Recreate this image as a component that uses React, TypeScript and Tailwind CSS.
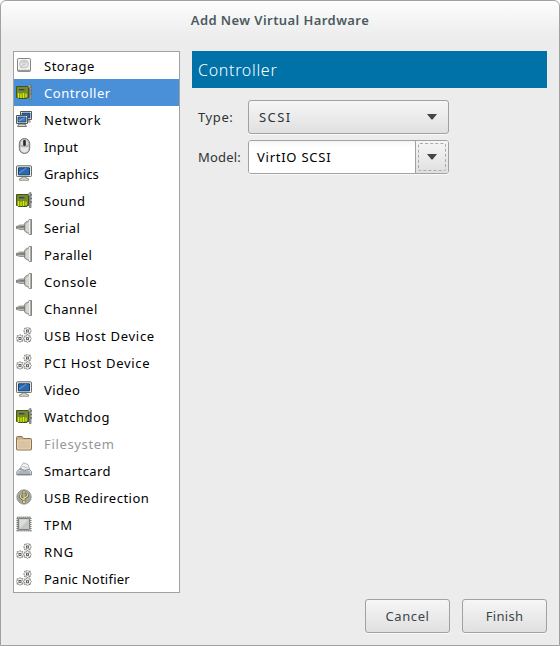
import React from "react";

type Kind = "disk" | "card" | "network" | "mouse" | "monitor" | "serial" | "gears" | "folder" | "smartcard" | "usb" | "chip";

function Gear({ x, y }: { x: number; y: number }) {
  return (
    <g transform={`translate(${x} ${y})`}>
      <path d="M0-3.900L1.300-2.700 2.800-2.800 2.700-1.300 3.900 0 2.700 1.300 2.800 2.800 1.300 2.700 0 3.900-1.300 2.700-2.800 2.800-2.700 1.300-3.900 0-2.700-1.300-2.800-2.800-1.300-2.700z" fill="#f8f8f7" stroke="#5e615b" strokeWidth=".9" strokeDasharray="1.600 .4" />
      <rect x="-1" y="-1" width="2" height="2" fill="#fff" stroke="#555852" strokeWidth=".9" />
    </g>
  );
}

function Icon({ kind }: { kind: Kind }) {
  return (
    <svg width="16" height="16" viewBox="0 0 16 16" className="block shrink-0">
      {kind === "disk" && (
        <>
          <rect x="1.500" y="1.500" width="13" height="13" rx="1" fill="#cfcfcf" stroke="#858782" />
          <path d="M2.500 2.500h11v9.500h-11z" fill="#ededed" stroke="#fff" strokeWidth=".8" />
          <ellipse cx="8" cy="7" rx="4.300" ry="3.800" fill="#e2e2e2" stroke="#c2c2c2" />
          <path d="M4.500 11l3-3.500 2-.5M5.500 5.500q2.500-1.500 5 0" fill="none" stroke="#b4b4b4" strokeWidth=".8" />
          <path d="M2 13h12v1.500H2z" fill="#989a96" />
        </>
      )}
      {kind === "card" && (
        <>
          <path d="M.5 2.500h12v11H11v1H2.500v-1h-2z" fill="#728c20" stroke="#46531c" />
          <path d="M2.500 4.500H9v2.300H2.500z" fill="#3b433c" stroke="#8a9573" strokeWidth=".6" />
          <path d="M2.500 9v5M5 9.500v4.500M7.500 9v5M10 9.500v4" stroke="#dce900" strokeWidth="1.400" />
          <path d="M11.500 3.500l2-2.800H15v14.800h-1.500v-12z" fill="#b9bcb5" stroke="#666963" strokeWidth=".8" />
          <path d="M14 3h2M14 6.500h2M14 10h2" stroke="#72756d" strokeWidth="1.300" />
        </>
      )}
      {kind === "network" && (
        <>
          <path d="M4.500.5h11v8h-11z" fill="#eeeeec" stroke="#555753" />
          <path d="M6 2h8v5H6z" fill="#2862a5" stroke="#123f75" strokeWidth=".7" />
          <path d="M12 9h2l1 2.500h-3z" fill="#999" />
          <path d="M.5 4.500h11v8H.5z" fill="#eeeeec" stroke="#555753" />
          <path d="M2 6h8v5H2z" fill="#3c79bb" stroke="#123f75" strokeWidth=".8" />
          <path d="M2.500 9.500L8 6.500h1.500L3.500 10.500z" fill="#72a2d3" />
          <path d="M3 13h6l1.500 2.500h-9z" fill="#d3d7cf" stroke="#555753" strokeWidth=".8" />
        </>
      )}
      {kind === "mouse" && (
        <>
          <rect x="3.300" y=".5" width="10.400" height="15" rx="5" fill="#b4b5b2" stroke="#767874" />
          <path d="M5 7V4.500Q5.500 2 7 1.500V7zM12 7V4.500Q11.500 2 10 1.500V7z" fill="#dcdcda" />
          <rect x="7.200" y="2" width="2.600" height="6" rx="1.300" fill="#2b2d2d" />
          <path d="M4.500 8.700q4 1.600 8 0v2.300q-.8 3.500-4 3.500T4.500 11z" fill="#e7e7e6" />
        </>
      )}
      {kind === "monitor" && (
        <>
          <rect x=".5" y=".8" width="15" height="10.700" rx=".8" fill="#e9e9e5" stroke="#6b6d67" />
          <path d="M2.500 2.800h11v7h-11z" fill="#2b69b0" stroke="#173f71" />
          <path d="M3 7.500L9 3.300h2L3 9z" fill="#5d93cb" />
          <path d="M6 12h4v1l2.500.8v1.500h-9v-1.500L6 13z" fill="#d3d5cf" stroke="#73756f" strokeWidth=".7" />
        </>
      )}
      {kind === "serial" && (
        <>
          <path d="M0 7.500q2.200-.2 3.500-1.500h4.500Q8 3 13 1.500V.5h2.500v15H13v-1Q8 13 8 10.500H3.500Q2.200 9.500 0 9.500z" fill="#b9bbb6" stroke="#858781" strokeWidth=".8" />
          <path d="M0 7.500q3 0 5-.5h4.500v1.800H0z" fill="#777a74" />
          <path d="M9.500 7q0-3 4-4.500v11Q9.500 12.500 9.500 10z" fill="#d4d6d1" />
          <path d="M8.500 5.500v5.700" stroke="#7d807a" />
          <path d="M13.500 1v14" stroke="#f1f1f0" />
          <path d="M15.300.5v15" stroke="#797c76" strokeWidth=".9" />
        </>
      )}
      {kind === "gears" && (
        <>
          <Gear x={11.500} y={4} />
          <Gear x={4} y={11.500} />
          <Gear x={11.500} y={11.700} />
        </>
      )}
      {kind === "folder" && (
        <>
          <path d="M.5 2.500q0-1 1-1H6l1.500 2h7q1 0 1 1v9.500q0 1-1 1h-13q-1 0-1-1z" fill="#c9ad86" stroke="#8d7250" />
          <path d="M1.500 6q0-1 1-1h12v8q0 1-1 1h-12z" fill="#d9c3a3" stroke="#ead9be" strokeWidth=".8" />
        </>
      )}
      {kind === "smartcard" && (
        <>
          <path d="M.8 9.500L4 6.500h8.500l3 3V13H.8z" fill="#d9dce0" stroke="#858b90" strokeWidth=".9" />
          <path d="M4.500 5L7.500.8l4.500 1.700 1.500 4.200-3.500 1.800-4-1z" fill="#eff1f2" stroke="#a1a6aa" strokeWidth=".8" />
          <path d="M3.500 7.500q5 2 10-.2M2.500 10h11.500" fill="none" stroke="#868d92" />
          <path d="M1.500 11.500h13V13h-13z" fill="#7e858a" />
          <path d="M6.500 4.500l5 1.500" stroke="#b8bdc0" />
        </>
      )}
      {kind === "usb" && (
        <>
          <circle cx="8" cy="8" r="7.200" fill="#a6a7a4" stroke="#898b86" strokeWidth=".8" />
          <path d="M8 2v11M8 11L4.500 8.500V6M8 9.500L11.500 7V4.500" fill="none" stroke="#60614b" strokeWidth="2.600" />
          <path d="M8 2v11M8 11L4.500 8.500V6M8 9.500L11.500 7V4.500" fill="none" stroke="#e5da89" strokeWidth="1.300" />
          <path d="M8 1l2 3H6z" fill="#e5da89" stroke="#60614b" strokeWidth=".5" />
          <circle cx="8" cy="13" r="1.600" fill="#e5da89" stroke="#60614b" strokeWidth=".5" />
        </>
      )}
      {kind === "chip" && (
        <>
          <rect x="1.300" y="1.300" width="13.400" height="13.400" fill="#d5d5d4" stroke="#777a75" strokeWidth="1.600" strokeDasharray="1.200 .8" />
          <rect x="2.500" y="2.500" width="11" height="11" rx=".5" fill="#c5c7c4" stroke="#7f827c" />
          <path d="M3.500 3.500h9L4 12.500z" fill="#dcdddb" />
        </>
      )}
    </svg>
  );
}

const devices: [string, Kind, string][] = [
  ["Storage", "disk", "tracking-[0.5px]"],
  ["Controller", "card", "tracking-[0.56px]"],
  ["Network", "network", "tracking-[0.72px]"],
  ["Input", "mouse", "tracking-[0.2px]"],
  ["Graphics", "monitor", "tracking-[0.15px]"],
  ["Sound", "card", "tracking-[0.5px]"],
  ["Serial", "serial", "tracking-[0.4px]"],
  ["Parallel", "serial", "tracking-[0.4px]"],
  ["Console", "serial", "tracking-[0.6px]"],
  ["Channel", "serial", "tracking-[0.5px]"],
  ["USB Host Device", "gears", "tracking-[0.7px]"],
  ["PCI Host Device", "gears", "tracking-[0.7px]"],
  ["Video", "monitor", "tracking-[0.4px]"],
  ["Watchdog", "card", "tracking-[0.5px]"],
  ["Filesystem", "folder", "tracking-[0.65px]"],
  ["Smartcard", "smartcard", "tracking-[0.4px]"],
  ["USB Redirection", "usb", "tracking-[0.5px]"],
  ["TPM", "chip", "tracking-[0.6px]"],
  ["RNG", "gears", "tracking-[0.9px]"],
  ["Panic Notifier", "gears", "tracking-[0.25px]"],
];

function Arrow() {
  return (
    <svg width="10" height="6" viewBox="0 0 10 6" className="block">
      <path d="M0 0h10L5.500 5.500h-1z" fill="#3d4649" />
    </svg>
  );
}

export default function App() {
  return (
    <div className="h-[646px] w-[560px] bg-white font-['Noto_Sans',sans-serif] text-[13px] leading-[18px]">
      <div className="flex h-full flex-col rounded-t-[6px] border border-[#a1a1a1] bg-[#ececec] bg-[linear-gradient(to_bottom,#fdfdfd_0px,#ececec_38px)] px-3">
        <h1 className="flex h-[50px] shrink-0 items-start justify-center pt-[10px] text-[13px] font-semibold text-[#4c5a61]">
          <span className="whitespace-nowrap tracking-[0.42px]">Add New Virtual Hardware</span>
        </h1>
        <main className="flex gap-3">
          <ul className="h-[542px] w-[167px] shrink-0 border border-[#a1a1a1] bg-white">
            {devices.map(([name, icon, tracking]) => (
              <li
                key={name}
                className={`flex h-[27px] gap-3 pl-[2px] pt-[5px] ${name === "Controller" ? "bg-[#4a90d9] text-white" : name === "Filesystem" ? "text-[#949796]" : "text-black"}`}
              >
                <Icon kind={icon} />
                <span className={`whitespace-nowrap ${tracking}`}>{name}</span>
              </li>
            ))}
          </ul>
          <section className="w-[355px]">
            <h2 className="flex h-[37px] items-center bg-[#0072a8] pl-[6px] text-[16px] font-light leading-[22px] text-white">
              <span className="tracking-[0.7px]">Controller</span>
            </h2>
            <div className="mt-3 grid grid-cols-[50px_201px] gap-x-[6px] gap-y-[6px] text-[#2e3436]">
              <label className="flex h-[34px] items-center pl-[6px] tracking-[0.6px]">Type:</label>
              <button className="flex h-[34px] items-center justify-between rounded-[3px] border border-[#a1a1a1] bg-linear-to-b from-[#f6f6f6] to-[#e0e0e0] pl-[10px] pr-[11px] shadow-[0_1px_0_#fafafa]">
                <span className="tracking-[1.4px]">SCSI</span>
                <Arrow />
              </button>
              <label className="flex h-[34px] items-center pl-[6px] tracking-[0.2px]">Model:</label>
              <div className="flex h-[34px] overflow-hidden rounded-[3px] border border-[#a1a1a1] bg-white shadow-[0_1px_0_#fafafa]">
                <div className="flex w-[167px] items-center border-r border-[#a1a1a1] bg-linear-to-b from-[#f5f5f5] via-white via-20% to-white pl-2 text-black">
                  <span className="tracking-[0.75px]">VirtIO SCSI</span>
                </div>
                <button className="flex grow bg-linear-to-b from-[#f6f6f6] to-[#e0e0e0] p-[2px]">
                  <span className="flex h-[28px] w-[28px] items-center justify-center rounded-[2px] border border-dashed border-[#aaa]"><Arrow /></span>
                </button>
              </div>
            </div>
          </section>
        </main>
        <footer className="flex justify-end gap-3 pt-[6px] text-[#3d4649]">
          <button className="h-[34px] w-[85px] rounded-[3px] border border-[#a1a1a1] bg-linear-to-b from-[#f6f6f6] to-[#e0e0e0] tracking-[0.6px] shadow-[0_1px_0_#fafafa]">Cancel</button>
          <button className="h-[34px] w-[85px] rounded-[3px] border border-[#a1a1a1] bg-linear-to-b from-[#f6f6f6] to-[#e0e0e0] tracking-[0.3px] shadow-[0_1px_0_#fafafa]">Finish</button>
        </footer>
      </div>
    </div>
  );
}
